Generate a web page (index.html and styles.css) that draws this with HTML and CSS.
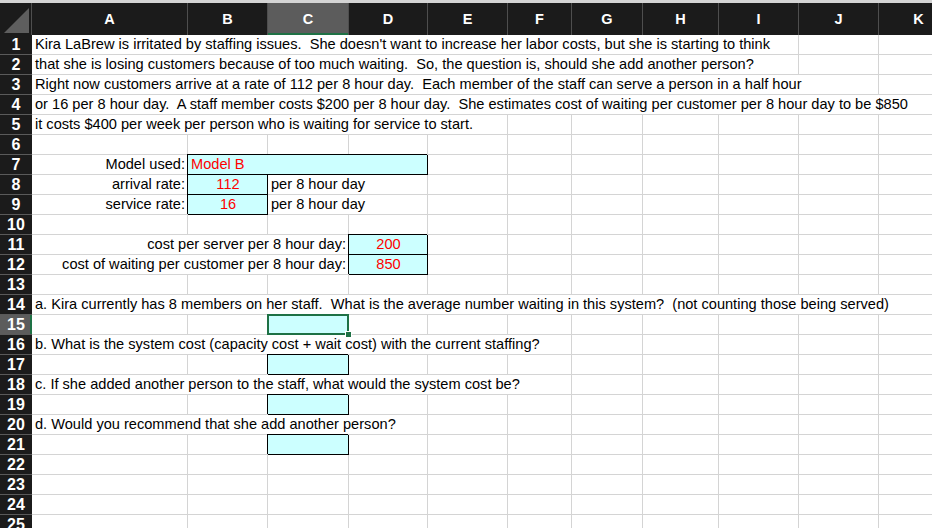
FILE: index.html
```html
<!DOCTYPE html>
<html>
<head>
<meta charset="utf-8">
<link rel="stylesheet" href="styles.css">
</head>
<body>
<div class="top"></div>
<div class="sheet">
  <div class="corner"><svg class="tri" width="32" height="32" viewBox="0 0 32 32"><polygon points="4,30 29,30 29,5" fill="#5e5e5e"/></svg></div>
  <div class="ch">A</div><div class="ch">B</div><div class="ch selc">C</div><div class="ch">D</div><div class="ch">E</div><div class="ch">F</div><div class="ch">G</div><div class="ch">H</div><div class="ch">I</div><div class="ch">J</div><div class="ch">K</div>

  <div class="rh">1</div><div class="c s9">Kira LaBrew is irritated by staffing issues.  She doesn't want to increase her labor costs, but she is starting to think</div><div class="c"></div><div class="c"></div>
  <div class="rh">2</div><div class="c s9">that she is losing customers because of too much waiting.  So, the question is, should she add another person?</div><div class="c"></div><div class="c"></div>
  <div class="rh">3</div><div class="c s10">Right now customers arrive at a rate of 112 per 8 hour day.  Each member of the staff can serve a person in a half hour</div><div class="c"></div>
  <div class="rh">4</div><div class="c s11">or 16 per 8 hour day.  A staff member costs $200 per 8 hour day.  She estimates cost of waiting per customer per 8 hour day to be $850</div>
  <div class="rh">5</div><div class="c s5">it costs $400 per week per person who is waiting for service to start.</div><div class="c"></div><div class="c"></div><div class="c"></div><div class="c"></div><div class="c"></div><div class="c"></div>
  <div class="rh">6</div><div class="c"></div><div class="c"></div><div class="c"></div><div class="c"></div><div class="c"></div><div class="c"></div><div class="c"></div><div class="c"></div><div class="c"></div><div class="c"></div><div class="c"></div>
  <div class="rh">7</div><div class="c r">Model used:</div><div class="c s3 box red">Model B</div><div class="c"></div><div class="c"></div><div class="c"></div><div class="c"></div><div class="c"></div><div class="c"></div><div class="c"></div>
  <div class="rh">8</div><div class="c r">arrival rate:</div><div class="c box red ctr">112</div><div class="c s2">per 8 hour day</div><div class="c"></div><div class="c"></div><div class="c"></div><div class="c"></div><div class="c"></div><div class="c"></div><div class="c"></div>
  <div class="rh">9</div><div class="c r">service rate:</div><div class="c box red ctr">16</div><div class="c s2">per 8 hour day</div><div class="c"></div><div class="c"></div><div class="c"></div><div class="c"></div><div class="c"></div><div class="c"></div><div class="c"></div>
  <div class="rh">10</div><div class="c"></div><div class="c"></div><div class="c"></div><div class="c"></div><div class="c"></div><div class="c"></div><div class="c"></div><div class="c"></div><div class="c"></div><div class="c"></div><div class="c"></div>
  <div class="rh">11</div><div class="c s3 r">cost per server per 8 hour day:</div><div class="c box red ctr">200</div><div class="c"></div><div class="c"></div><div class="c"></div><div class="c"></div><div class="c"></div><div class="c"></div><div class="c"></div>
  <div class="rh">12</div><div class="c s3 r">cost of waiting per customer per 8 hour day:</div><div class="c box red ctr">850</div><div class="c"></div><div class="c"></div><div class="c"></div><div class="c"></div><div class="c"></div><div class="c"></div><div class="c"></div>
  <div class="rh">13</div><div class="c"></div><div class="c"></div><div class="c"></div><div class="c"></div><div class="c"></div><div class="c"></div><div class="c"></div><div class="c"></div><div class="c"></div><div class="c"></div><div class="c"></div>
  <div class="rh">14</div><div class="c s11">a. Kira currently has 8 members on her staff.  What is the average number waiting in this system?  (not counting those being served)</div>
  <div class="rh selr">15</div><div class="c"></div><div class="c"></div><div class="c box sel"></div><div class="c"></div><div class="c"></div><div class="c"></div><div class="c"></div><div class="c"></div><div class="c"></div><div class="c"></div><div class="c"></div>
  <div class="rh">16</div><div class="c s6">b. What is the system cost (capacity cost + wait cost) with the current staffing?</div><div class="c"></div><div class="c"></div><div class="c"></div><div class="c"></div><div class="c"></div>
  <div class="rh">17</div><div class="c"></div><div class="c"></div><div class="c box"></div><div class="c"></div><div class="c"></div><div class="c"></div><div class="c"></div><div class="c"></div><div class="c"></div><div class="c"></div><div class="c"></div>
  <div class="rh">18</div><div class="c s6">c. If she added another person to the staff, what would the system cost be?</div><div class="c"></div><div class="c"></div><div class="c"></div><div class="c"></div><div class="c"></div>
  <div class="rh">19</div><div class="c"></div><div class="c"></div><div class="c box"></div><div class="c"></div><div class="c"></div><div class="c"></div><div class="c"></div><div class="c"></div><div class="c"></div><div class="c"></div><div class="c"></div>
  <div class="rh">20</div><div class="c s4">d. Would you recommend that she add another person?</div><div class="c"></div><div class="c"></div><div class="c"></div><div class="c"></div><div class="c"></div><div class="c"></div><div class="c"></div>
  <div class="rh">21</div><div class="c"></div><div class="c"></div><div class="c box"></div><div class="c"></div><div class="c"></div><div class="c"></div><div class="c"></div><div class="c"></div><div class="c"></div><div class="c"></div><div class="c"></div>
  <div class="rh">22</div><div class="c"></div><div class="c"></div><div class="c"></div><div class="c"></div><div class="c"></div><div class="c"></div><div class="c"></div><div class="c"></div><div class="c"></div><div class="c"></div><div class="c"></div>
  <div class="rh">23</div><div class="c"></div><div class="c"></div><div class="c"></div><div class="c"></div><div class="c"></div><div class="c"></div><div class="c"></div><div class="c"></div><div class="c"></div><div class="c"></div><div class="c"></div>
  <div class="rh">24</div><div class="c"></div><div class="c"></div><div class="c"></div><div class="c"></div><div class="c"></div><div class="c"></div><div class="c"></div><div class="c"></div><div class="c"></div><div class="c"></div><div class="c"></div>
  <div class="rh">25</div><div class="c"></div><div class="c"></div><div class="c"></div><div class="c"></div><div class="c"></div><div class="c"></div><div class="c"></div><div class="c"></div><div class="c"></div><div class="c"></div><div class="c"></div>
</div>
</body>
</html>
```

FILE: styles.css
```css
html, body {
  margin: 0;
  padding: 0;
  background: #ffffff;
  overflow: hidden;
}
body {
  font-family: "Liberation Sans", Arial, Helvetica, sans-serif;
  color: #000;
}
.top {
  height: 3px;
  background: #d4d4d4;
}
.sheet {
  display: grid;
  grid-template-columns: 32px 156px 80px 81px 79px 80px 64px 71px 76px 80px 80px 80px;
  grid-template-rows: 32px;
  grid-auto-rows: 20px;
  width: 1039px;
}
.corner {
  background: #1b1b1b;
  border-right: 1px solid #4e4e4e;
  box-sizing: border-box;
}
.tri { display: block; }
.ch {
  background: #1b1b1b;
  color: #fff;
  font-weight: bold;
  font-size: 14.5px;
  display: flex;
  align-items: center;
  justify-content: center;
  border-right: 1px solid #4e4e4e;
  box-sizing: border-box;
}
.ch.selc {
  background: #5c5c5c;
  box-shadow: inset 0 -2px 0 #1e7145;
}
.rh {
  background: #1b1b1b;
  color: #fff;
  font-weight: bold;
  font-size: 16px;
  line-height: 20px;
  text-align: center;
  border-bottom: 1px solid #5a5a5a;
  box-sizing: border-box;
}
.rh.selr {
  background: #5c5c5c;
  box-shadow: inset -2px 0 0 #1e7145;
}
.c {
  border-right: 1px solid #d4d4d4;
  border-bottom: 1px solid #d4d4d4;
  box-sizing: border-box;
  font-size: 14.6px;
  line-height: 19px;
  padding: 0 2px 0 3px;
  white-space: pre;
  overflow: visible;
}
.s2 { grid-column: span 2; }
.s3 { grid-column: span 3; }
.s4 { grid-column: span 4; }
.s5 { grid-column: span 5; }
.s6 { grid-column: span 6; }
.s9 { grid-column: span 9; }
.s10 { grid-column: span 10; }
.s11 { grid-column: span 11; }
.r { text-align: right; }
.ctr { text-align: center; }
.red { color: #ff0000; }
.box {
  background: #ccffff;
  border-right: 1px solid #000;
  border-bottom: 1px solid #000;
  box-shadow: -1px -1px 0 0 #000;
}
.sel {
  position: relative;
}
.sel::before {
  content: "";
  position: absolute;
  left: -1px;
  top: -1px;
  right: -1px;
  bottom: -1px;
  border: 2px solid #1e7145;
}
.sel::after {
  content: "";
  position: absolute;
  right: -4px;
  bottom: -4px;
  width: 5px;
  height: 5px;
  background: #1e7145;
  border: 1px solid #fff;
}
```
